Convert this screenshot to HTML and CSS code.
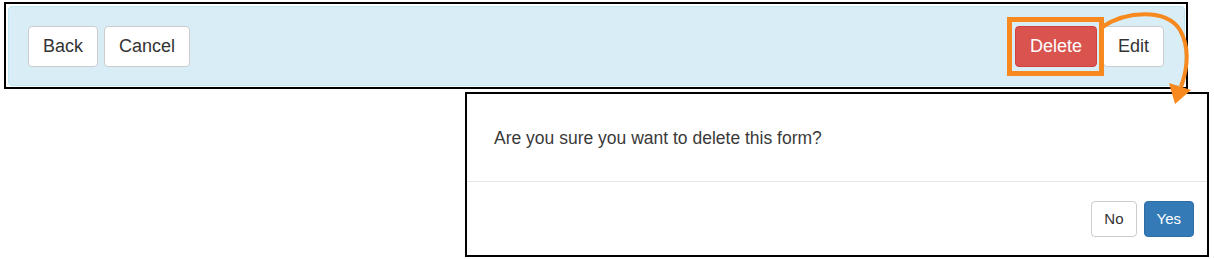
FILE: index.html
```html
<!DOCTYPE html>
<html lang="en">
<head>
    <meta charset="UTF-8">
    <meta name="viewport" content="width=device-width, initial-scale=1.0">
    <title>Delete form</title>
    <link rel="stylesheet" href="styles.css">
</head>
<body>
    <div class="shot">
        <div class="panel">
            <div class="group">
                <button class="btn btn-lg">Back</button>
                <button class="btn btn-lg">Cancel</button>
            </div>
            <div class="group group-right">
                <span class="marked">
                    <button class="btn btn-lg btn-danger">Delete</button>
                    <span class="mark"></span>
                </span>
                <button class="btn btn-lg">Edit</button>
            </div>
        </div>
    </div>

    <div class="dialog">
        <div class="dialog-body">Are you sure you want to delete this form?</div>
        <div class="dialog-footer">
            <button class="btn">No</button>
            <button class="btn btn-primary">Yes</button>
        </div>
    </div>

    <!-- callout arrow from the Delete button to the dialog -->
    <svg class="arrow" width="1214" height="259" viewBox="0 0 1214 259">
        <path d="M1102 27 C1126 11 1166 8 1180 30 C1190 48 1187 70 1181 87" fill="none" stroke="#f7891f" stroke-width="4"/>
        <polygon points="1169,83 1191,90 1175,104" fill="#f7891f"/>
    </svg>
</body>
</html>
```

FILE: styles.css
```css
body {
    margin: 0;
    background: #fff;
    font-family: "Liberation Sans", Arial, sans-serif;
    color: #333;
    position: relative;
    width: 1214px;
    height: 259px;
    overflow: hidden;
}
.shot {
    margin: 2px 0 0 4px;
    width: 1177px;
    border: 2px solid #000;
    padding: 2px 1px 1px 2px;
}
.panel {
    display: flex;
    justify-content: space-between;
    background: #d9edf7;
    border: 1px solid #bce8f1;
    border-radius: 4px;
    padding: 19px 20px 18px 19px;
}
.group {
    display: flex;
    gap: 6px;
}
.group-right {
    gap: 6px;
}
.btn {
    font-family: "Liberation Sans", Arial, sans-serif;
    font-size: 15px;
    line-height: 20px;
    padding: 7px 12px;
    color: #333;
    background: #fff;
    border: 1px solid #ccc;
    border-radius: 4px;
    cursor: pointer;
}
.btn-lg {
    font-size: 18px;
    line-height: 23px;
    padding: 8px 14px;
}
.btn-danger {
    color: #fff;
    background: #d9534f;
    border-color: #d43f3a;
}
.btn-primary {
    color: #fff;
    background: #337ab7;
    border-color: #2e6da4;
}
.marked {
    position: relative;
    display: flex;
}
.mark {
    position: absolute;
    top: -9px;
    bottom: -9px;
    left: -8px;
    right: -7px;
    border: 5px solid #f7891f;
}
.dialog {
    margin: 3px 0 0 465px;
    width: 740px;
    border: 2px solid #000;
}
.dialog-body {
    font-size: 17.5px;
    line-height: 24px;
    color: #3a3a3a;
    padding: 32px 27px 31px 27px;
}
.dialog-footer {
    display: flex;
    justify-content: flex-end;
    gap: 7px;
    border-top: 1px solid #e5e5e5;
    padding: 19px 13px 18px 13px;
}
.arrow {
    position: absolute;
    left: 0;
    top: 0;
    pointer-events: none;
}
```
